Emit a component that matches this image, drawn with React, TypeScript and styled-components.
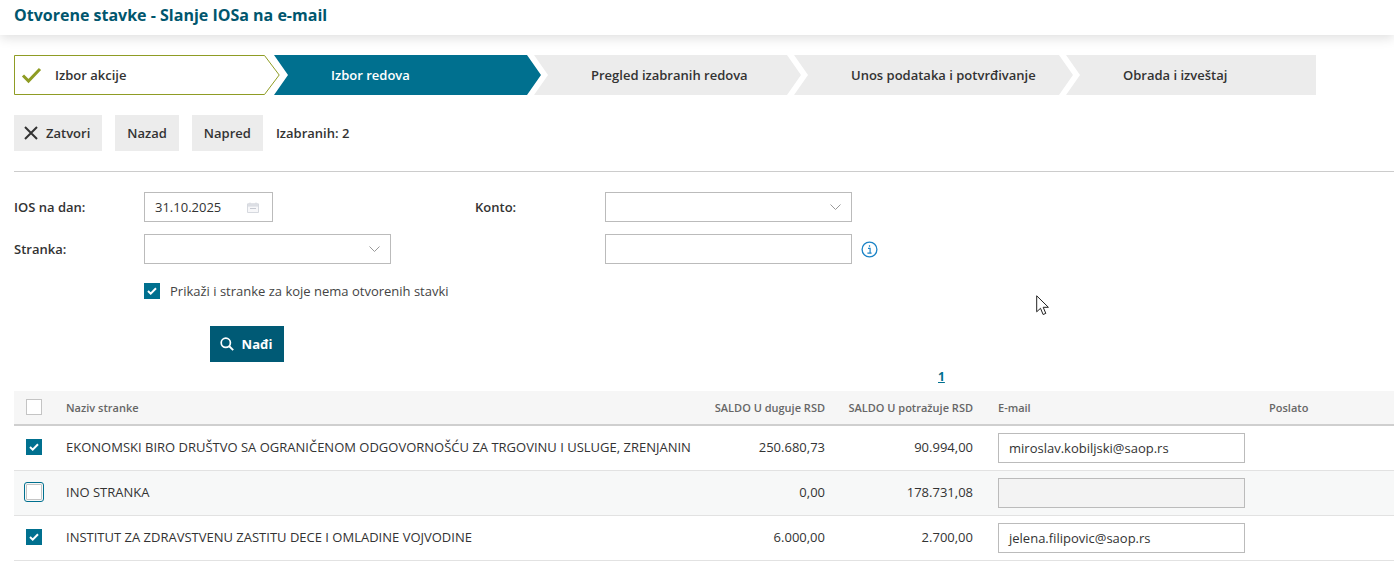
import React from "react";
import styled, { createGlobalStyle } from "styled-components";

const Global = createGlobalStyle`
  html, body { margin: 0; padding: 0; background: #fff; }
  body { font-family: "Open Sans", "Liberation Sans", sans-serif; font-size: 13px; color: #333; width: 1394px; height: 562px; overflow: hidden; }
  * { box-sizing: border-box; }
`;

const Page = styled.div`position: relative; width: 1394px; height: 562px; overflow: hidden;`;
const Header = styled.header`
  height: 35px; background: #fff; box-shadow: 0 3px 12px rgba(0,0,0,.13); padding: 5px 0 0 14px;
  font-size: 16px; line-height: 20px; font-weight: 700; color: #00566e;
`;
const Stepper = styled.div`display: flex; margin: 20px 0 0 14px; height: 40px;`;
const Step = styled.div<{ $w: number; $bg: string; $color: string }>`
  width: ${p => p.$w}px; height: 40px; margin-left: -7px; padding-left: 57px; background: ${p => p.$bg};
  color: ${p => p.$color}; font-weight: 600; line-height: 40px; font-size: 13px; white-space: nowrap;
  clip-path: polygon(0 0, calc(100% - 14px) 0, 100% 50%, calc(100% - 14px) 100%, 0 100%, 14px 50%);
`;
const ActiveStep = styled(Step)`margin-left: -6px;`;
const LastStep = styled(Step)`clip-path: polygon(0 0, 100% 0, 100% 100%, 0 100%, 14px 50%);`;
const FirstStep = styled.div`
  position: relative; width: 266px; height: 40px; padding-left: 41px; line-height: 40px; font-weight: 600; color: #333;
  svg { position: absolute; left: 0; top: 0; }
  span { position: relative; }
`;
const Toolbar = styled.div`display: flex; align-items: center; gap: 13px; margin: 20px 0 0 14px; height: 36px;`;
const Btn = styled.button`
  height: 36px; padding: 0 12px; background: #ececec; border: 0; color: #333; font: 600 13px "Open Sans", sans-serif;
  display: flex; align-items: center; gap: 8px;
`;
const CloseBtn = styled(Btn)`padding-left: 10px;`;
const Selected = styled.span`font-weight: 600; color: #333;`;
const Divider = styled.div`height: 1px; background: #ccc; margin: 20px 0 0 14px;`;
const Form = styled.div`
  display: grid; grid-template-columns: 130px 331px 130px 1fr; grid-auto-rows: 30px; row-gap: 12px; margin: 20px 0 0 14px; align-items: center;
`;
const Label = styled.label`font-weight: 600; color: #333;`;
const Field = styled.div<{ $w: number; $bg?: string }>`
  width: ${p => p.$w}px; height: 30px; border: 1px solid #bbb; background: ${p => p.$bg ?? "#fff"}; display: flex; align-items: center;
  justify-content: space-between; padding: 0 10px; color: #333; font-size: 13px;
`;
const WithInfo = styled.div`display: flex; align-items: center; gap: 9px;`;
const CheckRow = styled.div`display: flex; align-items: center; gap: 10px; margin: 19px 0 0 144px; height: 16px; color: #444;`;
const Box = styled.span<{ $on?: boolean; $focus?: boolean }>`
  position: relative; width: 16px; height: 16px; flex: none; display: inline-flex; align-items: center; justify-content: center;
  background: ${p => p.$on ? "#00708f" : "#fff"}; border: ${p => p.$on ? "0" : "1px solid #c4c4c4"};
  ${p => p.$focus ? "outline: 1px solid #00708f; outline-offset: 1px; border-radius: 1px;" : ""}
`;
const FindBtn = styled.button`
  margin: 27px 0 0 210px; width: 74px; height: 36px; background: #005a75; border: 0; color: #fff; font: 700 13px "Open Sans", sans-serif;
  display: flex; align-items: center; justify-content: center; gap: 8px; padding: 0 2px 0 0;
`;
const Pager = styled.div`
  height: 29px; padding: 6px 0 0 938px; font-weight: 700; font-size: 12px; line-height: 18px; color: #00708f; text-decoration: underline;
`;
const Table = styled.div`margin-left: 14px;`;
const Row = styled.div<{ $bg?: string; $h: number; $line: string; $lh?: number }>`
  display: grid; grid-template-columns: 52px 629px 130px 148px 296px 1fr; align-items: center;
  height: ${p => p.$h}px; background: ${p => p.$bg ?? "#fff"}; border-bottom: ${p => p.$lh ?? 1}px solid ${p => p.$line};
`;
const HeadCell = styled.div<{ $right?: boolean; $pad?: number }>`
  font-size: 11px; font-weight: 600; color: #666; white-space: nowrap; text-align: ${p => p.$right ? "right" : "left"}; padding-left: ${p => p.$pad ?? 0}px;
`;
const Cell = styled.div<{ $right?: boolean }>`
  font-size: 13px; line-height: 18px; margin-bottom: 2px; color: #333; white-space: nowrap; text-align: ${p => p.$right ? "right" : "left"};
`;
const EmailCell = styled.div`padding-left: 25px;`;
const BoxCell = styled.div`padding-left: 12px; display: flex; margin-bottom: 2px;`;
const Cursor = styled.svg`position: absolute; left: 1036px; top: 295px;`;

const Tick = () => (
  <svg width="10" height="8" viewBox="0 0 10 8"><path d="M1 4l2.7 2.6L9 1.2" fill="none" stroke="#fff" strokeWidth="2" /></svg>
);
const Chevron = () => (
  <svg width="11" height="6" viewBox="0 0 11 6"><path d="M.5.5l5 5 5-5" fill="none" stroke="#999" strokeWidth="1" /></svg>
);

export default function App() {
  return (
    <Page>
      <Global />
      <Header>Otvorene stavke - Slanje IOSa na e-mail</Header>
      <Stepper>
        <FirstStep>
          <svg width="266" height="40" viewBox="0 0 266 40">
            <path d="M.5.5H250.5L265.2 20 250.5 39.5H.5Z" fill="#fff" stroke="#8f9c24" />
            <path d="M9 20.5l5.5 5.5L26 14" fill="none" stroke="#8f9c24" strokeWidth="3" />
          </svg>
          <span>Izbor akcije</span>
        </FirstStep>
        <ActiveStep $w={267} $bg="#00708f" $color="#fff">Izbor redova</ActiveStep>
        <Step $w={267} $bg="#ececec" $color="#333">Pregled izabranih redova</Step>
        <Step $w={279} $bg="#ececec" $color="#333">Unos podataka i potvrđivanje</Step>
        <LastStep $w={250} $bg="#ececec" $color="#333">Obrada i izveštaj</LastStep>
      </Stepper>
      <Toolbar>
        <CloseBtn>
          <svg width="14" height="14" viewBox="0 0 14 14"><path d="M1 1l12 12M13 1L1 13" stroke="#333" strokeWidth="2" /></svg>
          Zatvori
        </CloseBtn>
        <Btn>Nazad</Btn>
        <Btn>Napred</Btn>
        <Selected>Izabranih: 2</Selected>
      </Toolbar>
      <Divider />
      <Form>
        <Label>IOS na dan:</Label>
        <Field $w={129}>
          31.10.2025
          <svg width="12" height="11" viewBox="0 0 12 11" style={{ marginRight: 3 }}>
            <path d="M.5 2h11v8.5H.5z" fill="#f7f7f9" stroke="#d6d9df" /><path d="M.5 2h11v2H.5zM3 .5V2M9 .5V2" fill="#e2e4e9" stroke="#d6d9df" /><path d="M3 6.5h6" stroke="#c6c9d1" />
          </svg>
        </Field>
        <Label>Konto:</Label>
        <Field $w={247}><span /><Chevron /></Field>
        <Label>Stranka:</Label>
        <Field $w={247}><span /><Chevron /></Field>
        <span />
        <WithInfo>
          <Field $w={247} />
          <svg width="17" height="17" viewBox="0 0 17 17">
            <circle cx="8.5" cy="8.5" r="7.4" fill="none" stroke="#1b83c6" strokeWidth="1.3" />
            <path d="M7 7.3h2.1V12M6.4 12.2h4.2M8.5 4.2v1.6" fill="none" stroke="#1b83c6" strokeWidth="1.2" />
          </svg>
        </WithInfo>
      </Form>
      <CheckRow><Box $on><Tick /></Box>Prikaži i stranke za koje nema otvorenih stavki</CheckRow>
      <FindBtn>
        <svg width="14" height="14" viewBox="0 0 14 14"><circle cx="5.8" cy="5.8" r="4.6" fill="none" stroke="#fff" strokeWidth="1.7" /><path d="M9 9l4.2 4.2" stroke="#fff" strokeWidth="1.9" /></svg>
        Nađi
      </FindBtn>
      <Pager>1</Pager>
      <Table>
        <Row $h={35} $bg="#f6f6f6" $line="#cfcfcf" $lh={2}>
          <BoxCell><Box /></BoxCell>
          <HeadCell>Naziv stranke</HeadCell>
          <HeadCell $right>SALDO U duguje RSD</HeadCell>
          <HeadCell $right>SALDO U potražuje RSD</HeadCell>
          <HeadCell $pad={25}>E-mail</HeadCell>
          <HeadCell>Poslato</HeadCell>
        </Row>
        <Row $h={45} $line="#e2e2e2">
          <BoxCell><Box $on><Tick /></Box></BoxCell>
          <Cell>EKONOMSKI BIRO DRUŠTVO SA OGRANIČENOM ODGOVORNOŠĆU ZA TRGOVINU I USLUGE, ZRENJANIN</Cell>
          <Cell $right>250.680,73</Cell>
          <Cell $right>90.994,00</Cell>
          <EmailCell><Field $w={247}>miroslav.kobiljski@saop.rs</Field></EmailCell>
          <span />
        </Row>
        <Row $h={45} $bg="#f7f8f8" $line="#e2e2e2">
          <BoxCell><Box $focus /></BoxCell>
          <Cell>INO STRANKA</Cell>
          <Cell $right>0,00</Cell>
          <Cell $right>178.731,08</Cell>
          <EmailCell><Field $w={247} $bg="#f3f3f3" /></EmailCell>
          <span />
        </Row>
        <Row $h={45} $line="#e2e2e2">
          <BoxCell><Box $on><Tick /></Box></BoxCell>
          <Cell>INSTITUT ZA ZDRAVSTVENU ZASTITU DECE I OMLADINE VOJVODINE</Cell>
          <Cell $right>6.000,00</Cell>
          <Cell $right>2.700,00</Cell>
          <EmailCell><Field $w={247}>jelena.filipovic@saop.rs</Field></EmailCell>
          <span />
        </Row>
      </Table>
      <Cursor width="13" height="21" viewBox="0 0 13 21"><path d="M.7.8v16l3.8-3.5 2.6 6.2 2.7-1.1-2.6-6.1h5.2Z" fill="#fff" stroke="#222" strokeWidth="1" /></Cursor>
    </Page>
  );
}
